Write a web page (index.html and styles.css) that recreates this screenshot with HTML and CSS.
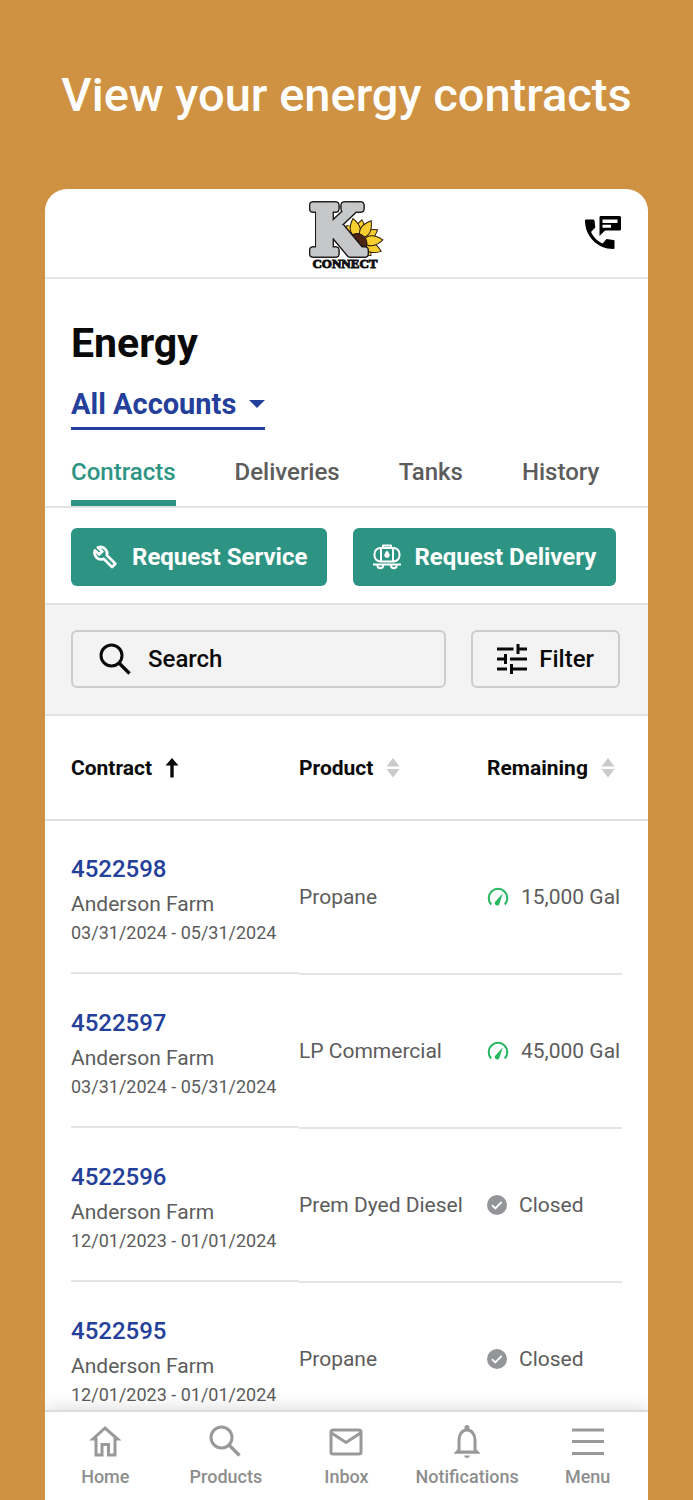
FILE: index.html
```html
<!DOCTYPE html>
<html lang="en">
<head>
<meta charset="utf-8">
<meta name="viewport" content="width=device-width, initial-scale=1">
<title>Energy contracts</title>
<link rel="stylesheet" href="styles.css">
</head>
<body>
<svg class="defs" aria-hidden="true">
  <symbol id="sort" viewBox="0 0 14 20"><path d="M7 0l6.500 8.500H.5zM7 19.500l6.500-8.500H.5z"/></symbol>
  <symbol id="gauge" viewBox="0 0 22 20"><path d="M4.200 17.500A9.300 9.300 0 1 1 17.800 17.500" fill="none" stroke="currentColor" stroke-width="2"/><path d="M15.800 6.200L12.400 17a2.400 2.400 0 0 1-4.400-2z" fill="currentColor"/></symbol>
  <symbol id="closed" viewBox="0 0 20 20"><circle cx="10" cy="10" r="10" fill="currentColor"/><path d="M5 10.200l3.300 3.200 6.400-6.600" fill="none" stroke="#fff" stroke-width="1.800"/></symbol>
  <symbol id="magnifier" viewBox="0 0 32 32"><circle cx="12.500" cy="12.500" r="10.500" fill="none" stroke="currentColor" stroke-width="3"/><path d="M20 20l10.500 10.500" stroke="currentColor" stroke-width="3.400"/></symbol>
  <path id="petal" d="M5 0Q12-10 25 0Q12 10 5 0z"/>
</svg>
<h1 class="headline">View your energy contracts</h1>
<div class="phone">
  <header class="topbar">
    <svg class="logo" viewBox="0 0 74 74" role="img" aria-label="K Connect">
      <g fill="#f9cf2f" stroke="#2b1d0c" stroke-width="1" transform="translate(48 46)">
        <use href="#petal" transform="rotate(-124) scale(.8 1)"/>
        <use href="#petal" transform="rotate(-80) scale(.9 1)"/>
        <use href="#petal" transform="rotate(-32) scale(.92 1)"/>
        <use href="#petal" transform="rotate(46) scale(.75 1)"/>
        <use href="#petal" transform="rotate(-102) scale(.96 1)"/>
        <use href="#petal" transform="rotate(22)"/>
        <use href="#petal" transform="rotate(-58)"/>
        <use href="#petal" transform="rotate(-5)"/>
      </g>
      <path d="M38 46Q40 37 48 37.500Q56 39 57 47Q57 52 54 56z" fill="#4b2412" stroke="#22120a"/>
      <text class="logo-k" x="0" y="58">K</text>
      <text class="logo-name" x="35" y="72" text-anchor="middle">CONNECT</text>
    </svg>
    <button class="contact" aria-label="Contact us">
      <svg viewBox="0 0 36 34"><path d="M0 4.500Q0 3.500 1 3.500h7.500l1 1 .8 7-4.300 4.500c2.500 5.500 6.500 9 11.500 11.500l4-4.500 7 1q1 .2 1 1V32q0 1-1 1C12 33 0 20 0 4.500zM15.500 0H34.500a1.500 1.500 0 0 1 1.500 1.500V13a1.500 1.500 0 0 1-1.500 1.500H20L14.500 20V1.500A1.500 1.500 0 0 1 15.500 0zM17.500 3.500V7H32.500V3.500zM17.500 8.800v3h8.500v-3z" fill-rule="evenodd"/></svg>
    </button>
  </header>
  <section class="intro">
    <h2 class="title">Energy</h2>
    <div class="account">
      <select class="account-select" aria-label="Account"><option>All Accounts</option></select>
      <svg class="caret" viewBox="0 0 16 8"><path d="M0 0h16L8 8z"/></svg>
    </div>
  </section>
  <nav class="tabs" aria-label="Energy sections">
    <a class="tab active" href="#contracts" aria-current="page">Contracts</a>
    <a class="tab" href="#deliveries">Deliveries</a>
    <a class="tab" href="#tanks">Tanks</a>
    <a class="tab" href="#history">History</a>
  </nav>
  <div class="actions">
    <button class="action"><svg class="wrench" viewBox="-2 -1 31 28"><path d="M5.500 2.500Q10 .8 13.500 4Q17 7.500 15.500 11L25 20.500L21.300 24.200L12 15Q7.500 17 4 13.500Q.8 10 2.300 5.800L7 10.300L10.500 6.900z"/></svg>Request Service</button>
    <button class="action"><svg class="tanker" viewBox="0 0 28 26"><rect x="1.500" y="4" width="25" height="13.500" rx="6"/><path d="M10 4V1.500h8V4M8 4.500v12.500M20 4.500v12.500M0 20.500h28M4.500 21.500a2.800 2.800 0 0 0 5.600 0M18 21.500a2.800 2.800 0 0 0 5.600 0"/><path d="M14 6.500q3.500 4 2.500 5.800a2.700 2.700 0 0 1-5 0q-1-1.800 2.500-5.800z" class="solid"/></svg>Request Delivery</button>
  </div>
  <div class="toolbar">
    <label class="search"><svg viewBox="0 0 32 32"><use href="#magnifier"/></svg><input type="search" placeholder="Search" aria-label="Search"></label>
    <button class="filter"><svg viewBox="0 0 30 30"><path d="M0 5h16.500M20 5h10M21 0v10M0 15h9M13 15h17M8.500 10v10M0 25h10M14.500 25H30M14.500 20v10"/></svg>Filter</button>
  </div>
  <main class="list">
    <table class="contracts">
      <colgroup><col class="col-contract"><col class="col-product"><col></colgroup>
      <thead>
        <tr>
          <th scope="col">Contract<svg class="up" viewBox="0 0 14 20"><path d="M7 0l6.500 7.500H8.700V19.500H5.300V7.500H.5z"/></svg></th>
          <th scope="col">Product<svg class="sort" viewBox="0 0 14 20"><use href="#sort"/></svg></th>
          <th scope="col">Remaining<svg class="sort" viewBox="0 0 14 20"><use href="#sort"/></svg></th>
        </tr>
      </thead>
      <tbody>
        <tr>
          <td><div class="cell contract"><a href="#4522598">4522598</a><span>Anderson Farm</span><small>03/31/2024 - 05/31/2024</small></div></td>
          <td><div class="cell">Propane</div></td>
          <td><div class="cell open"><svg viewBox="0 0 22 20"><use href="#gauge"/></svg>15,000 Gal</div></td>
        </tr>
        <tr>
          <td><div class="cell contract"><a href="#4522597">4522597</a><span>Anderson Farm</span><small>03/31/2024 - 05/31/2024</small></div></td>
          <td><div class="cell">LP Commercial</div></td>
          <td><div class="cell open"><svg viewBox="0 0 22 20"><use href="#gauge"/></svg>45,000 Gal</div></td>
        </tr>
        <tr>
          <td><div class="cell contract"><a href="#4522596">4522596</a><span>Anderson Farm</span><small>12/01/2023 - 01/01/2024</small></div></td>
          <td><div class="cell">Prem Dyed Diesel</div></td>
          <td><div class="cell closed"><svg viewBox="0 0 20 20"><use href="#closed"/></svg>Closed</div></td>
        </tr>
        <tr>
          <td><div class="cell contract"><a href="#4522595">4522595</a><span>Anderson Farm</span><small>12/01/2023 - 01/01/2024</small></div></td>
          <td><div class="cell">Propane</div></td>
          <td><div class="cell closed"><svg viewBox="0 0 20 20"><use href="#closed"/></svg>Closed</div></td>
        </tr>
      </tbody>
    </table>
  </main>
  <nav class="bottom" aria-label="Main">
    <a href="#home"><svg viewBox="0 0 34 34"><path d="M17 4L5 15H8V31h6V20.500h6.500V31H27V15H29.500z"/></svg>Home</a>
    <a href="#products"><svg viewBox="0 0 34 34"><use href="#magnifier" x="0" y="1" width="32" height="32"/></svg>Products</a>
    <a href="#inbox"><svg viewBox="0 0 34 34"><rect x="2" y="6" width="30" height="24" rx="2"/><path d="M2.500 9L17 18.500 31.500 9"/></svg>Inbox</a>
    <a href="#notifications"><svg viewBox="0 0 34 34"><path d="M9 27.500V16c0-6 3.500-10 8-10s8 4 8 10V27.500"/><path class="fill" d="M4 29l4-4v1.500h18V25l4 4v.8H4zM14 31.500h6q-.5 2.500-3 2.500T14 31.500zM14.500 6V3.500a2.500 2.500 0 0 1 5 0v2.500z"/></svg>Notifications</a>
    <a href="#menu"><svg viewBox="0 0 34 34"><path d="M1 6h32M1 17.500h32M1 29.500h32"/></svg>Menu</a>
  </nav>
</div>
</body>
</html>
```
FILE: styles.css
```css
* { box-sizing: border-box; }
body {
  margin: 0;
  height: 100vh;
  padding: 0 45px;
  display: flex;
  flex-direction: column;
  overflow: hidden;
  background: #cf9142;
  font-family: Roboto, "Liberation Sans", sans-serif;
  color: #0a0a0a;
}
.defs { position: absolute; width: 0; height: 0; }
svg { flex: none; }
button { font: inherit; color: inherit; border: 0; margin: 0; cursor: pointer; }
a { text-decoration: none; color: inherit; }
.headline {
  margin: 0 -20px;
  padding: 65px 0 64px;
  text-align: center;
  color: #fff;
  font-size: 47px;
  line-height: 60px;
  font-weight: 500;
}
.phone {
  flex: 1;
  min-height: 0;
  display: flex;
  flex-direction: column;
  background: #fff;
  border-radius: 22px 22px 0 0;
}
.topbar {
  display: grid;
  grid-template-columns: 1fr auto 1fr;
  align-items: center;
  height: 90px;
  padding: 0 27px;
  border-bottom: 2px solid #e6e6e6;
}
.logo { grid-column: 2; width: 74px; height: 74px; overflow: visible; }
.logo-k {
  font-family: "DejaVu Serif Condensed", "DejaVu Serif", serif;
  font-weight: 700;
  font-size: 68px;
  fill: #c6c7c9;
  stroke: #c6c7c9;
  stroke-width: 5;
  stroke-linejoin: round;
  filter: drop-shadow(1px 0 0 #1b1718) drop-shadow(-1px 0 0 #1b1718) drop-shadow(0 1px 0 #1b1718) drop-shadow(0 -1px 0 #1b1718);
}
.logo-name {
  font-family: "Liberation Serif", serif;
  font-weight: 700;
  font-size: 13px;
  fill: #111;
  stroke: #111;
  stroke-width: 1;
}
.contact { justify-self: end; padding: 0; background: none; }
.contact svg { display: block; width: 36px; height: 34px; }
.intro { padding: 38px 26px 0; }
.title { margin: 0; font-size: 41px; line-height: 52px; font-weight: 700; }
.account {
  display: inline-flex;
  align-items: center;
  margin-top: 11px;
  border-bottom: 3px solid #24409a;
}
.account-select {
  appearance: none;
  border: 0;
  margin: 0 -28px 0 0;
  padding: 0 40px 0 0;
  height: 47px;
  background: none;
  color: #24409a;
  font: 700 29px/34px Roboto, sans-serif;
}
.caret { width: 16px; height: 8px; fill: #24409a; pointer-events: none; }
.tabs {
  display: flex;
  gap: 59px;
  padding: 0 26px;
  border-bottom: 2px solid #e2e2e2;
}
.tab {
  padding: 27px 0 13px;
  border-bottom: 6px solid transparent;
  font-size: 24px;
  line-height: 30px;
  font-weight: 500;
  color: #5c5c5c;
}
.tab.active { color: #2d9484; border-color: #2d9484; }
.actions { display: flex; gap: 26px; padding: 20px 26px 17px; }
.action {
  display: flex;
  align-items: center;
  gap: 13px;
  height: 58px;
  padding: 0 20px;
  border-radius: 6px;
  background: #2d9484;
  color: #fff;
  font-size: 24px;
  font-weight: 700;
  white-space: nowrap;
}
.action svg { width: 28px; height: 26px; fill: none; stroke: #fff; stroke-width: 2; stroke-linejoin: round; }
.action .wrench { stroke-width: 3; }
.action .solid { fill: #fff; stroke: none; }
.toolbar {
  display: flex;
  gap: 25px;
  padding: 25px 28px 26px 26px;
  background: #f3f3f3;
  border: solid #e2e2e2;
  border-width: 2px 0;
}
.search, .filter {
  display: flex;
  align-items: center;
  height: 58px;
  border: 2px solid #cdcdcd;
  border-radius: 6px;
  background: none;
  font-size: 24px;
  font-weight: 500;
}
.search { flex: 1; min-width: 0; gap: 17px; padding: 0 26px; }
.search svg { width: 32px; height: 32px; }
.search input { flex: 1; min-width: 0; border: 0; padding: 0; background: none; font: inherit; color: inherit; }
.search input::placeholder { color: #0a0a0a; opacity: 1; }
.filter { gap: 12px; padding: 0 24px; }
.filter svg { width: 30px; height: 30px; stroke: #0a0a0a; stroke-width: 3; }
.list { flex: 1; min-height: 0; overflow: hidden; }
.contracts { width: 100%; border-collapse: collapse; table-layout: fixed; }
.col-contract { width: 254px; }
.col-product { width: 188px; }
.contracts th, .contracts td { padding: 0; }
.contracts th:first-child, .contracts td:first-child { padding-left: 26px; }
.contracts td:last-child { padding-right: 26px; }
.contracts th {
  height: 104px;
  border-bottom: 2px solid #e0e0e0;
  text-align: left;
  font-size: 21px;
  font-weight: 700;
  white-space: nowrap;
}
.contracts th svg { width: 14px; height: 20px; margin-left: 13px; vertical-align: -3px; fill: #cacaca; }
.contracts th .up { fill: #0a0a0a; }
.contracts td { vertical-align: top; }
.cell {
  display: flex;
  align-items: center;
  height: 154px;
  border-bottom: 2px solid #e4e4e4;
  color: #5c5c5c;
  font-size: 21px;
  white-space: nowrap;
}
.contract { height: 153px; flex-direction: column; align-items: flex-start; justify-content: center; padding-top: 2px; }
.contract a { font-size: 24px; line-height: 36px; font-weight: 500; color: #24409a; }
.contract span { line-height: 34px; }
.contract small { font-size: 18px; line-height: 24px; }
.open { gap: 12px; }
.open svg { width: 22px; height: 20px; color: #25b660; }
.closed { gap: 12px; }
.closed svg { width: 20px; height: 20px; color: #939598; }
.bottom {
  display: grid;
  grid-template-columns: repeat(5, 1fr);
  height: 90px;
  border-top: 2px solid #dcdcdc;
  background: #fff;
  box-shadow: 0 -2px 16px rgba(0, 0, 0, 0.14);
  clip-path: inset(-24px 0 0 0);
}
.bottom a {
  display: flex;
  flex-direction: column;
  align-items: center;
  gap: 7px;
  padding-top: 12px;
  color: #8e8e8e;
  font-size: 18px;
  line-height: 24px;
  font-weight: 500;
}
.bottom svg { width: 34px; height: 34px; fill: none; stroke: #999; stroke-width: 3; color: #999; }
.bottom .fill { fill: #999; stroke: none; }
```
